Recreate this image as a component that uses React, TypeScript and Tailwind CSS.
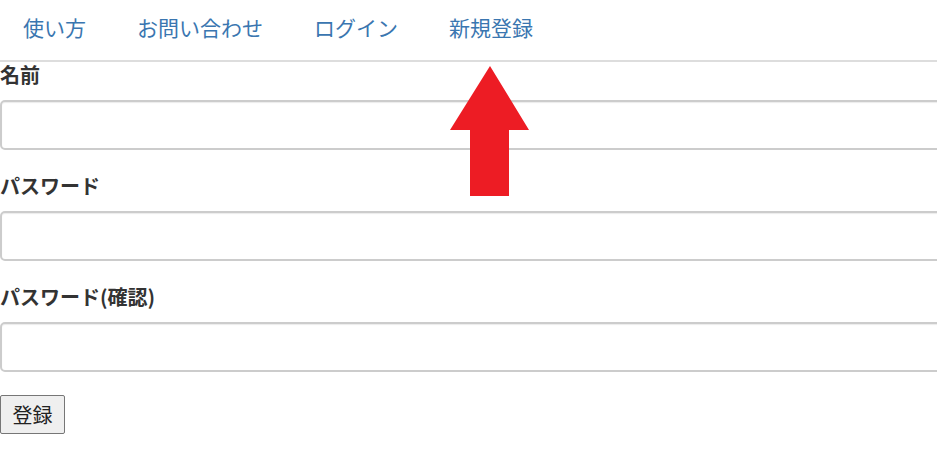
const navItems = ["使い方", "お問い合わせ", "ログイン", "新規登録"];

const fields = ["名前", "パスワード", "パスワード(確認)"];

function UpArrow() {
  return (
    <svg
      className="absolute left-0 top-0 pointer-events-none"
      width="937"
      height="462"
      viewBox="0 0 937 462"
    >
      <polygon
        points="490,66 450,130 470,130 470,196 509,196 509,130 529,130"
        fill="#ed1c24"
      />
    </svg>
  );
}

export default function App() {
  return (
    <div
      className="relative w-[937px] h-[462px] overflow-hidden bg-white text-[#333]"
      style={{ fontFamily: '"Noto Sans CJK JP", "Noto Sans", sans-serif' }}
    >
      <nav className="h-[62px] border-b-2 border-[#ddd]">
        <ul className="flex gap-[51px] pl-[23px] pt-[17px]">
          {navItems.map((item) => (
            <li key={item}>
              <a className="block text-[21px] leading-[21px] text-[#3a76b0]">{item}</a>
            </li>
          ))}
        </ul>
      </nav>

      <form className="flex flex-col">
        {fields.map((label) => (
          <div key={label} className="flex flex-col mb-[23px]">
            <label className="text-[20px] leading-[26px] font-bold text-[#333] mb-[12px]">
              {label}
            </label>
            <input
              type={label === "名前" ? "text" : "password"}
              className="w-[980px] h-[50px] border-2 border-[#ccc] rounded-[5px] bg-white shadow-[inset_0_1px_1px_rgba(0,0,0,0.08)] px-3 outline-none"
            />
          </div>
        ))}
        <div>
          <button
            type="button"
            className="w-[65px] h-[39px] border border-[#767676] rounded-[2px] bg-[#efefef] text-[20px] leading-none text-[#222]"
          >
            登録
          </button>
        </div>
      </form>

      <UpArrow />
    </div>
  );
}
